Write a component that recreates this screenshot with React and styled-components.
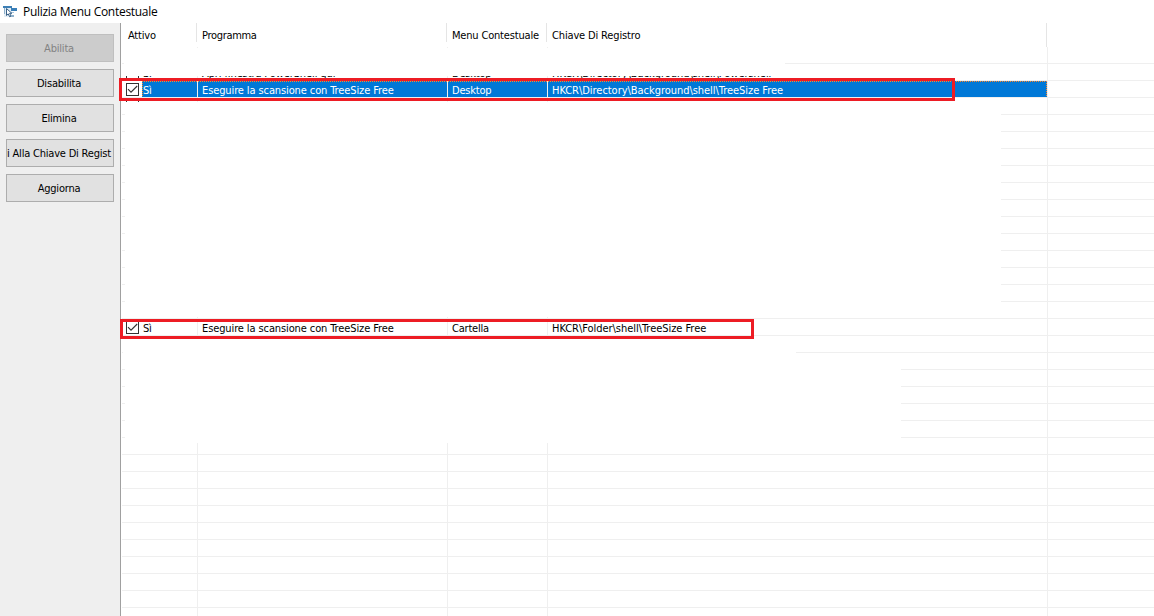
import styled, { createGlobalStyle, css } from "styled-components";

const COLUMNS = [
  { key: "active", label: "Attivo", width: 75, headSpacing: -0.2, spacing: -0.2 },
  { key: "program", label: "Programma", width: 250, headSpacing: -0.32, spacing: -0.11 },
  { key: "menu", label: "Menu Contestuale", width: 100, headSpacing: -0.18, spacing: -0.2 },
  { key: "path", label: "Chiave Di Registro", width: 500, headSpacing: -0.15, spacing: -0.04 },
];

const ACTIONS = [
  { label: "Abilita", disabled: true },
  { label: "Disabilita" },
  { label: "Elimina" },
  { label: "i Alla Chiave Di Regist" },
  { label: "Aggiorna" },
];

const ENTRIES = {
  1: {
    active: "Sì",
    program: "Apri finestra PowerShell qui",
    menu: "Desktop",
    path: "HKCR\\Directory\\Background\\shell\\Powershell",
  },
  2: {
    active: "Sì",
    program: "Eseguire la scansione con TreeSize Free",
    menu: "Desktop",
    path: "HKCR\\Directory\\Background\\shell\\TreeSize Free",
    selected: true,
  },
  3: { active: "", program: "", menu: "", path: "" },
  16: {
    active: "Sì",
    program: "Eseguire la scansione con TreeSize Free",
    menu: "Cartella",
    path: "HKCR\\Folder\\shell\\TreeSize Free",
  },
};

const ROW_COUNT = 34;

// white patches that hide the other entries
const PATCHES = [
  { x: 124, y: 48, w: 661, h: 28 },
  { x: 125, y: 102, w: 876, h: 215 },
  { x: 123, y: 339, w: 673, h: 17 },
  { x: 125, y: 356, w: 776, h: 87 },
];

const HIGHLIGHTS = [
  { x: 119, y: 78, w: 836, h: 23 },
  { x: 120, y: 319, w: 634, h: 20 },
];

function AppIcon() {
  return (
    <svg width="16" height="16" viewBox="0 0 16 16" shapeRendering="crispEdges">
      <rect x="0" y="2" width="9" height="2" fill="#3d7fb5" />
      <rect x="1" y="4" width="8" height="9" fill="#e3edf5" />
      <rect x="1" y="4" width="1" height="6" fill="#8fb1cc" />
      <rect x="8" y="4" width="6" height="3" fill="#3a7fb8" />
      <rect x="8" y="8" width="3" height="1" fill="#a9c5da" />
      <path
        d="M3.5 4.5v7l1.7-1.6 1.5 2.9 1.3-.7-1.4-2.8h2.2z"
        fill="#fff"
        stroke="#24507a"
        strokeWidth="0.9"
        shapeRendering="auto"
      />
      <rect x="8" y="11" width="3" height="2" fill="#8fb1cc" />
    </svg>
  );
}

function CheckBox() {
  return (
    <Box>
      <svg width="11" height="11" viewBox="0 0 11 11">
        <path d="M1 5.2l3 3 6.2-6.2" fill="none" stroke="#333" strokeWidth="1.1" />
      </svg>
    </Box>
  );
}

function EntryRow({ entry }) {
  if (!entry) {
    return (
      <Row>
        {COLUMNS.map((col) => (
          <Cell key={col.key} $width={col.width} />
        ))}
      </Row>
    );
  }

  return (
    <Row>
      <CheckArea>
        <CheckBox />
      </CheckArea>
      <Selection $selected={entry.selected}>
        {COLUMNS.map((col, i) => (
          <Cell key={col.key} $width={col.width} $first={i === 0} $spacing={col.spacing}>
            {entry[col.key]}
          </Cell>
        ))}
      </Selection>
    </Row>
  );
}

export default function App() {
  return (
    <Window>
      <GlobalStyle />
      <TitleBar>
        <AppIcon />
        <Title>Pulizia Menu Contestuale</Title>
      </TitleBar>

      <Content>
        <Sidebar>
          {ACTIONS.map((action) => (
            <Button key={action.label} disabled={action.disabled}>
              {action.label}
            </Button>
          ))}
        </Sidebar>

        <List>
          <Header>
            {COLUMNS.map((col, i) => (
              <HeaderCell
                key={col.key}
                $width={col.width}
                $first={i === 0}
                $tall={i === 3}
                $spacing={col.headSpacing}
              >
                {col.label}
              </HeaderCell>
            ))}
          </Header>
          {Array.from({ length: ROW_COUNT }, (_, i) => (
            <EntryRow key={i} entry={ENTRIES[i]} />
          ))}
        </List>
      </Content>

      {PATCHES.map((area) => (
        <Patch key={area.y} $area={area} />
      ))}
      {HIGHLIGHTS.map((area) => (
        <Highlight key={area.y} $area={area} />
      ))}
    </Window>
  );
}

const GlobalStyle = createGlobalStyle`
  * {
    box-sizing: border-box;
  }

  body {
    margin: 0;
    background: #fff;
  }
`;

const Window = styled.div`
  position: relative;
  display: flex;
  flex-direction: column;
  width: 1154px;
  height: 616px;
  overflow: hidden;
  background: #fff;
  color: #000;
  font-family: "DejaVu Sans Condensed", "DejaVu Sans", sans-serif;
  font-stretch: condensed;
  font-size: 11px;
`;

const TitleBar = styled.header`
  display: flex;
  align-items: center;
  flex: none;
  gap: 4px;
  height: 23px;
  padding-left: 3px;
`;

const Title = styled.span`
  font-family: "Open Sans", "Noto Sans", sans-serif;
  font-stretch: normal;
  font-size: 12px;
  letter-spacing: -0.29px;
`;

const Content = styled.div`
  display: flex;
  flex: 1;
  min-height: 0;
`;

const Sidebar = styled.nav`
  display: flex;
  flex-direction: column;
  flex: none;
  gap: 7px;
  width: 121px;
  padding: 11px 6px;
  border-right: 1px solid #a0a0a0;
  background: #efefef;
`;

const Button = styled.button`
  width: 108px;
  height: 28px;
  padding: 1px 2px 0 0;
  overflow: hidden;
  border: 1px solid #adadad;
  background: #e1e1e1;
  color: #000;
  font: inherit;
  letter-spacing: -0.2px;
  white-space: nowrap;

  &:disabled {
    border-color: #bfbfbf;
    background: #ccc;
    color: #838383;
  }
`;

const List = styled.main`
  flex: 1;
  min-width: 0;
  padding-left: 1px;
  overflow: hidden;
`;

const Header = styled.div`
  display: flex;
  height: 24px;
`;

const HeaderCell = styled.div`
  flex: none;
  width: ${(props) => props.$width}px;
  height: ${(props) => (props.$tall ? 24 : 19)}px;
  padding-left: ${(props) => (props.$first ? 6 : 5)}px;
  border-right: 1px solid #e5e5e5;
  letter-spacing: ${(props) => props.$spacing}px;
  line-height: 26px;
  white-space: nowrap;
`;

const Row = styled.div`
  display: flex;
  height: 17px;
  border-bottom: 1px solid #efefef;
`;

const CheckArea = styled.div`
  flex: none;
  width: 20px;
  padding: 2px 0 0 4px;
`;

const Box = styled.span`
  display: block;
  width: 13px;
  height: 13px;
  border: 1px solid #333;
  background: #fff;

  svg {
    display: block;
  }
`;

const Selection = styled.div`
  position: relative;
  display: flex;
  height: 16px;

  ${(props) =>
    props.$selected &&
    css`
      background: #0078d7;
      color: #fff;

      /* dotted focus rectangle */
      &::after {
        content: "";
        position: absolute;
        inset: 0 1px 0 0;
        background:
          linear-gradient(90deg, #ff8728 50%, transparent 50%) 0 0 / 2px 1px repeat-x,
          linear-gradient(#ff8728 50%, transparent 50%) 0 0 / 1px 2px repeat-y,
          linear-gradient(#ff8728 50%, transparent 50%) 100% 0 / 1px 2px repeat-y;
      }
    `}
`;

const Cell = styled.div`
  flex: none;
  width: ${(props) => props.$width}px;
  height: 16px;
  padding-left: ${(props) => (props.$first ? 1 : 4)}px;
  border-right: 1px solid #efefef;
  letter-spacing: ${(props) => props.$spacing || 0}px;
  line-height: 19px;
  white-space: nowrap;

  &:first-child {
    width: ${(props) => (props.$first ? 56 : 76)}px;
  }
`;

const Patch = styled.div`
  position: absolute;
  left: ${(props) => props.$area.x}px;
  top: ${(props) => props.$area.y}px;
  width: ${(props) => props.$area.w}px;
  height: ${(props) => props.$area.h}px;
  background: #fff;
`;

const Highlight = styled(Patch)`
  border: 3px solid #ed1c24;
  background: none;
`;
